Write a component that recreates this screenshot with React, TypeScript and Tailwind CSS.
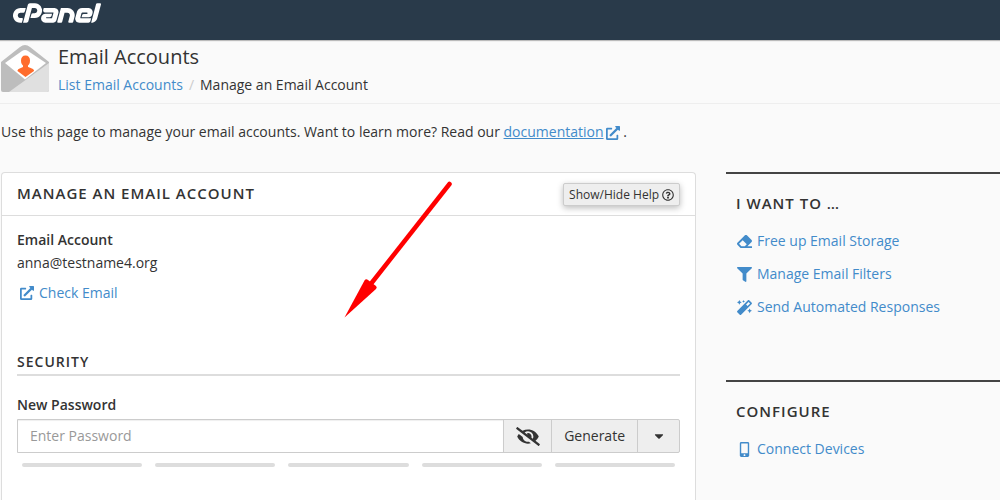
import { useState } from 'react';
import type { IconType } from 'react-icons';
import {
  FaCaretDown,
  FaEraser,
  FaExternalLinkAlt,
  FaEyeSlash,
  FaFilter,
  FaMagic,
  FaMobileAlt,
  FaRegQuestionCircle,
} from 'react-icons/fa';
import { SiCpanel } from 'react-icons/si';

type SideLink = {
  label: string;
  icon: IconType;
};

const wantTo: SideLink[] = [
  { label: 'Free up Email Storage', icon: FaEraser },
  { label: 'Manage Email Filters', icon: FaFilter },
  { label: 'Send Automated Responses', icon: FaMagic },
];

const configure: SideLink[] = [{ label: 'Connect Devices', icon: FaMobileAlt }];

function EmailIcon() {
  return (
    <svg viewBox="0 0 48 48" className="w-12 h-12 shrink-0" aria-hidden="true">
      <path d="M0 17 19 2q5-4 10 0l19 15v28q0 2-2 2H2q-2 0-2-2z" fill="#bdbdbd" />
      <path d="M48 18v27q0 2-2 2H8z" fill="#e0e0e0" />
      <path d="M4 18 21 6q3-2 6 0l18 12-21 16.500z" fill="#fff" />
      <path
        d="M24.500 10.500c3 0 4.500 2 4.500 5s-1 4-2 5v1.500c2.500 1 5.500 1.500 6 3.500v.5L24.500 32 16.500 26v-.5c.5-2 3.500-2.500 5.500-3.500v-1.500c-1-1-2-2-2-5s1.500-5 4.500-5z"
        fill="#ff6c2c"
      />
    </svg>
  );
}

function SideSection({ title, links }: { title: string; links: SideLink[] }) {
  return (
    <section className="border-t-2 border-[#444] px-2.5 pt-[19px] pb-[63px]">
      <h2 className="text-[15px]/5 font-semibold tracking-[1px]">{title}</h2>
      <ul className="mt-[18px] space-y-[13px]">
        {links.map(({ label, icon: Icon }) => (
          <li key={label}>
            <a href="#" className="flex items-center gap-1 text-[#428bca]">
              <Icon className="w-[17px] h-[15px]" />
              {label}
            </a>
          </li>
        ))}
      </ul>
    </section>
  );
}

export default function App() {
  const [password, setPassword] = useState('');
  const [visible, setVisible] = useState(true);

  return (
    <div className="min-h-screen flex flex-col bg-[#fafafa] font-['Open_Sans',sans-serif] text-sm/5 text-[#333]">
      <header className="h-10 bg-[#293a4a] px-[13px] shadow-[0_1px_1px_#bbb]">
        <a href="#" aria-label="cPanel" className="flex items-center w-[88px] h-[25px] overflow-hidden text-white">
          <SiCpanel className="w-[88px] h-[88px] shrink-0" />
        </a>
      </header>

      <div className="flex gap-[9px] px-px pt-[5px] pb-2 border-b border-[#eee]">
        <EmailIcon />
        <div>
          <h1 className="text-xl/6">Email Accounts</h1>
          <nav className="flex mt-1.5" aria-label="Breadcrumb">
            <a href="#" className="text-[#428bca]">List Email Accounts</a>
            <span className="px-1.5 text-[#ccc]">/</span>
            <span>Manage an Email Account</span>
          </nav>
        </div>
      </div>

      <p className="px-px mt-[18px]">
        Use this page to manage your email accounts. Want to learn more? Read our{' '}
        <a href="#" className="text-[#428bca]">
          <span className="underline">documentation</span>
          <FaExternalLinkAlt className="inline ml-0.5 w-3.5 h-3.5" />
        </a>{' '}
        .
      </p>

      <div className="flex flex-1 gap-[30px] mt-[30px] pl-px">
        <main className="relative flex-1 bg-white border border-b-0 border-[#ddd] rounded-t">
          <div className="flex items-start justify-between h-[43px] px-[15px] pt-2.5 border-b border-[#ddd]">
            <h2 className="text-[15px]/5 font-semibold tracking-[1px]">MANAGE AN EMAIL ACCOUNT</h2>
            <button
              type="button"
              className="flex items-center gap-[3px] h-[23px] px-[5px] bg-[#eee] border border-[#ccc] rounded-xs text-xs shadow-[0_2px_6px_#0004]"
            >
              Show/Hide Help
              <FaRegQuestionCircle className="w-3 h-3" />
            </button>
          </div>

          <div className="px-[15px] pt-3.5">
            <h3 className="font-semibold">Email Account</h3>
            <p className="mt-[3px]">anna@testname4.org</p>
            <a href="#" className="flex items-center gap-[5px] mt-2.5 pl-[3px] text-[#428bca]">
              <FaExternalLinkAlt className="w-3.5 h-3.5" />
              Check Email
            </a>

            <h2 className="mt-[49px] pb-0.5 border-b-2 border-[#ddd] font-semibold tracking-[1px]">SECURITY</h2>

            <label htmlFor="password" className="block mt-[19px] font-semibold">
              New Password
            </label>
            <div className="flex h-[34px] mt-1 bg-[#eee] border border-[#ccc] rounded-r-xs divide-x divide-[#ccc]">
              <input
                id="password"
                type={visible ? 'text' : 'password'}
                value={password}
                onChange={(e) => setPassword(e.target.value)}
                placeholder="Enter Password"
                className="flex-1 min-w-0 px-3 bg-white placeholder-[#999] shadow-[inset_0_1px_1px_#0001] outline-none"
              />
              <button
                type="button"
                aria-label="Toggle password visibility"
                className="w-12 flex items-center justify-center"
                onClick={() => setVisible(!visible)}
              >
                <FaEyeSlash className="w-6 h-[19px]" />
              </button>
              <button type="button" className="px-3">Generate</button>
              <button
                type="button"
                aria-label="Password options"
                className="w-[41px] flex items-center justify-center"
              >
                <FaCaretDown className="w-3.5 h-3.5" />
              </button>
            </div>

            {/* password strength segments */}
            <div className="grid grid-cols-5 gap-[13px] px-[5px] mt-2.5">
              {[1, 2, 3, 4, 5].map((n) => (
                <span key={n} className="h-1 bg-[#ddd] rounded-full" />
              ))}
            </div>
          </div>

          <svg viewBox="0 0 108 138" className="absolute top-2 left-[342px] w-[108px] h-[138px] pointer-events-none" aria-hidden="true">
            <path d="M105.500 3 26 104" stroke="red" strokeWidth="4.500" strokeLinecap="round" />
            <path d="M.5 136.500 20.500 99.500q1.500-2 3.500-.5l8 6q1.500 1.500 0 3z" fill="red" />
          </svg>
        </main>

        <aside className="w-[274px] shrink-0">
          <SideSection title="I WANT TO …" links={wantTo} />
          <SideSection title="CONFIGURE" links={configure} />
        </aside>
      </div>
    </div>
  );
}
